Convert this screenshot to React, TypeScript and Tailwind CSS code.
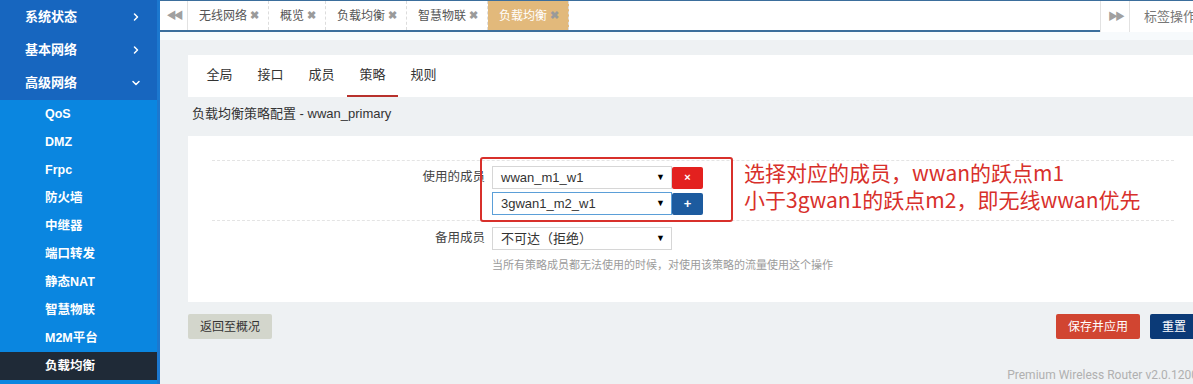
import { ChevronRight, ChevronDown } from 'lucide-react'

const topMenu = [
  { name: '系统状态', open: false },
  { name: '基本网络', open: false },
  { name: '高级网络', open: true },
]

const subMenu = ['QoS', 'DMZ', 'Frpc', '防火墙', '中继器', '端口转发', '静态NAT', '智慧物联', 'M2M平台', '负载均衡']

const pageTabs = [
  { name: '无线网络', active: false },
  { name: '概览', active: false },
  { name: '负载均衡', active: false },
  { name: '智慧物联', active: false },
  { name: '负载均衡', active: true },
]

const navTabs = ['全局', '接口', '成员', '策略', '规则']

function Caret() {
  return <span className="text-[9px] text-black leading-none">▼</span>
}

function FakeSelect({ value, focus }: { value: string; focus?: boolean }) {
  return (
    <div
      className={`w-[180px] h-[23px] flex items-center justify-between pl-[8px] pr-[6px] bg-white border text-[13px] text-[#333] ${
        focus ? 'border-[#5b9fd8]' : 'border-[#d6d6d6]'
      }`}
    >
      <span>{value}</span>
      <Caret />
    </div>
  )
}

export default function App() {
  return (
    <div className="w-[1193px] h-[384px] flex overflow-hidden bg-[#eef1f3] font-['Liberation_Sans','Noto_Sans_CJK_SC',sans-serif]">
      {/* 侧边栏 */}
      <aside className="w-[160px] shrink-0 flex flex-col bg-[#0a86e0] border-r-[3px] border-[#1c78cf]">
        {topMenu.map(m => (
          <div key={m.name} className="h-[33.3px] flex items-center justify-between pl-[25px] pr-[15px] bg-[#1766bf] text-white text-[13px] font-bold">
            <span>{m.name}</span>
            {m.open ? <ChevronDown size={12} strokeWidth={3} /> : <ChevronRight size={12} strokeWidth={3} />}
          </div>
        ))}
        {subMenu.map((s, i) => (
          <div
            key={s}
            className={`h-[28px] shrink-0 flex items-center pl-[45px] text-white text-[12.5px] font-bold ${
              i === subMenu.length - 1 ? 'bg-[#1f2a37]' : ''
            }`}
          >
            {s}
          </div>
        ))}
      </aside>

      <div className="flex-1 min-w-0 flex flex-col">
        {/* 标签栏 */}
        <div className="h-[32px] shrink-0 flex bg-white border-t border-[#3b6e9c]">
          <div className="flex-1 flex border-b-2 border-[#3b6e9c]">
            <div className="w-[28px] flex items-center justify-center text-[#a0a0a0] text-[10px] tracking-[-3px] border-r border-[#e2e2e2]">◀◀</div>
            {pageTabs.map((t, i) => (
              <div
                key={i}
                className={`flex items-center gap-[3px] pl-[11px] pr-[9px] text-[12px] border-r border-dashed border-[#dcdcdc] ${
                  t.active ? 'bg-[#e2b97b] text-white' : 'text-[#555]'
                }`}
              >
                <span>{t.name}</span>
                <span className="text-[#9a9a9a] text-[11px] font-bold">✖</span>
              </div>
            ))}
          </div>
          <div className="w-[30px] flex items-center justify-center text-[#a0a0a0] text-[10px] tracking-[-3px] border-l border-r border-[#e2e2e2]">▶▶</div>
          <div className="w-[63px] flex items-center pl-[14px] text-[13px] text-[#777] whitespace-nowrap overflow-hidden">标签操作</div>
        </div>
        <div className="h-[8px] shrink-0 bg-[#f7fafc]" />

        {/* 内容 */}
        <div className="w-[1010px] pl-[28px] pt-[15px] box-content">
          <div className="h-[42px] bg-white flex pl-[6px]">
            {navTabs.map(n => (
              <div
                key={n}
                className={`px-[12.5px] flex items-center text-[13px] text-[#333] border-b-2 ${
                  n === '策略' ? 'border-[#b8312c]' : 'border-transparent'
                }`}
              >
                {n}
              </div>
            ))}
          </div>

          <div className="h-[39px] flex items-center pb-[6px] pl-[4px] text-[13px] text-[#333]">负载均衡策略配置 - wwan_primary</div>

          <div className="relative bg-white h-[166px] pt-[24px] px-[24px]">
            <div className="border-t border-dashed border-[#e4e4e4]">
              <div className="flex py-[5px] border-b border-dashed border-[#e4e4e4]">
                <div className="w-[273px] h-[23px] flex items-center justify-end text-[12.5px] text-[#444]">使用的成员</div>
                <div className="ml-[7px] flex flex-col gap-[3px]">
                  <div className="flex items-center">
                    <FakeSelect value="wwan_m1_w1" />
                    <div className="w-[31px] h-[22px] flex items-center justify-center bg-[#e3211f] rounded-[2px] text-white text-[11px] font-bold">×</div>
                  </div>
                  <div className="flex items-center">
                    <FakeSelect value="3gwan1_m2_w1" focus />
                    <div className="w-[31px] h-[22px] flex items-center justify-center bg-[#1d5b9f] rounded-[2px] text-white text-[13px] font-bold">+</div>
                  </div>
                </div>
              </div>
              <div className="flex pt-[6px]">
                <div className="w-[273px] h-[23px] flex items-center justify-end text-[12.5px] text-[#444]">备用成员</div>
                <div className="ml-[7px] flex flex-col">
                  <FakeSelect value="不可达（拒绝）" />
                  <div className="mt-[7px] text-[11px] text-[#9b9b9b]">当所有策略成员都无法使用的时候，对使用该策略的流量使用这个操作</div>
                </div>
              </div>
            </div>

            {/* 标注 */}
            <div className="absolute left-[292px] top-[21px] w-[253px] h-[65px] border-2 border-[#d8302b] rounded-[3px]" />
            <div className="absolute left-[556px] top-[23px] text-[21px] leading-[27px] text-[#d8302b] whitespace-nowrap font-['Noto_Sans_CJK_SC',sans-serif]">
              <div>选择对应的成员，wwan的跃点m1</div>
              <div>小于3gwan1的跃点m2，即无线wwan优先</div>
            </div>
          </div>

          <div className="mt-[12px] flex justify-between">
            <div className="h-[25px] px-[12px] flex items-center bg-[#d3d6cc] rounded-[2px] text-[12px] text-[#333]">返回至概况</div>
            <div className="flex gap-[10px]">
              <div className="h-[25px] px-[12px] flex items-center bg-[#d14531] rounded-[2px] text-[12px] text-white">保存并应用</div>
              <div className="h-[25px] px-[12px] flex items-center bg-[#0b3a77] rounded-[2px] text-[12px] text-white">重置</div>
            </div>
          </div>

          <div className="mt-[27px] text-right text-[12px] text-[#b0b0b0] font-['Roboto',sans-serif]">Premium Wireless Router v2.0.1200</div>
        </div>
      </div>
    </div>
  )
}
